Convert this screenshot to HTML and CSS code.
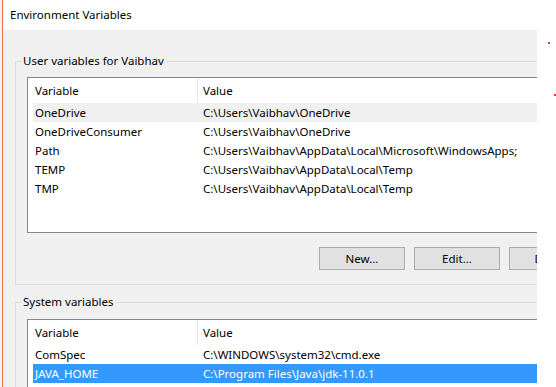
FILE: index.html
```html
<!DOCTYPE html>
<html lang="en">
<head>
  <meta charset="UTF-8">
  <meta name="viewport" content="width=device-width, initial-scale=1.0">
  <title>Environment Variables</title>
  <link rel="stylesheet" href="styles.css">
</head>
<body>
  <div class="edge"></div>
  <div class="window">
    <div class="titlebar">Environment Variables</div>
    <div class="dialog">
      <fieldset class="group">
        <legend>User variables for Vaibhav</legend>
        <div class="listbox user-list">
          <div class="list-head">
            <div class="head-cell first">Variable</div>
            <div class="head-cell">Value</div>
          </div>
          <div class="list-row hover"><span>OneDrive</span><span>C:\Users\Vaibhav\OneDrive</span></div>
          <div class="list-row"><span>OneDriveConsumer</span><span>C:\Users\Vaibhav\OneDrive</span></div>
          <div class="list-row"><span>Path</span><span>C:\Users\Vaibhav\AppData\Local\Microsoft\WindowsApps;</span></div>
          <div class="list-row"><span>TEMP</span><span>C:\Users\Vaibhav\AppData\Local\Temp</span></div>
          <div class="list-row"><span>TMP</span><span>C:\Users\Vaibhav\AppData\Local\Temp</span></div>
        </div>
        <div class="buttons">
          <button type="button">New...</button>
          <button type="button">Edit...</button>
          <button type="button">Delete</button>
        </div>
      </fieldset>
      <fieldset class="group system">
        <legend>System variables</legend>
        <div class="listbox">
          <div class="list-head">
            <div class="head-cell first">Variable</div>
            <div class="head-cell">Value</div>
          </div>
          <div class="list-row"><span>ComSpec</span><span>C:\WINDOWS\system32\cmd.exe</span></div>
          <div class="list-row selected"><span>JAVA_HOME</span><span>C:\Program Files\Java\jdk-11.0.1</span></div>
        </div>
      </fieldset>
    </div>
  </div>
  <span class="dot dot-a"></span>
  <span class="dot dot-b"></span>
</body>
</html>
```

FILE: styles.css
```css
* {
  box-sizing: border-box;
}

body {
  margin: 0;
  width: 556px;
  height: 387px;
  overflow: hidden;
  background-color: #fff;
  font-family: "Noto Sans", "Open Sans", sans-serif;
  font-size: 11.5px;
  color: #000;
  display: flex;
  position: relative;
}

.edge {
  width: 2px;
  flex-shrink: 0;
  background-color: #f2f2f2;
}

.window {
  width: 535px;
  flex-shrink: 0;
  border-left: 1px solid #e9743f;
  overflow: hidden;
  display: flex;
  flex-direction: column;
}

.titlebar {
  height: 30px;
  flex-shrink: 0;
  padding-left: 7px;
  line-height: 30px;
  background-color: #fff;
}

.dialog {
  flex: 1;
  width: 605px;
  flex-shrink: 0;
  padding: 23px 12px 0;
  background-color: #f0f0f0;
}

.group {
  margin: 0;
  padding: 0 0 14px 5px;
  border: 1px solid #dcdcdc;
}

.group legend {
  padding: 0 2px;
  line-height: 16px;
}

.group.system {
  margin-top: 9px;
  padding-bottom: 0;
}

.listbox {
  margin: 8px 0 0 6px;
  border: 1px solid #828790;
  background-color: #fff;
  overflow: hidden;
}

.user-list {
  height: 156px;
}

.system .listbox {
  margin-top: 9px;
  height: 120px;
}

.list-head {
  display: grid;
  grid-template-columns: 170px 1fr;
  height: 25px;
  line-height: 25px;
}

.head-cell {
  padding-left: 5px;
}

.head-cell.first {
  padding-left: 7px;
  border-right: 1px solid #e5e5e5;
}

.list-row {
  display: grid;
  grid-template-columns: 164px 1fr;
  margin-left: 5px;
  height: 19px;
  line-height: 19px;
  white-space: nowrap;
}

.list-row span {
  padding-left: 2px;
}

.list-row span + span {
  padding-left: 6px;
}

.list-row.hover {
  background-color: #f0f0f0;
}

.list-row.selected {
  background-color: #3399ff;
  color: #fff;
}

.buttons {
  display: flex;
  justify-content: flex-end;
  gap: 9px;
  margin-top: 14px;
}

.buttons button {
  width: 86px;
  height: 23px;
  padding: 0;
  border: 1px solid #adadad;
  background-color: #e1e1e1;
  font-family: inherit;
  font-size: 11.5px;
  color: #000;
}

.dot {
  position: absolute;
  width: 2px;
  height: 2px;
  background-color: #e4323a;
}

.dot-a {
  left: 548px;
  top: 42px;
}

.dot-b {
  left: 554px;
  top: 94px;
}
```
